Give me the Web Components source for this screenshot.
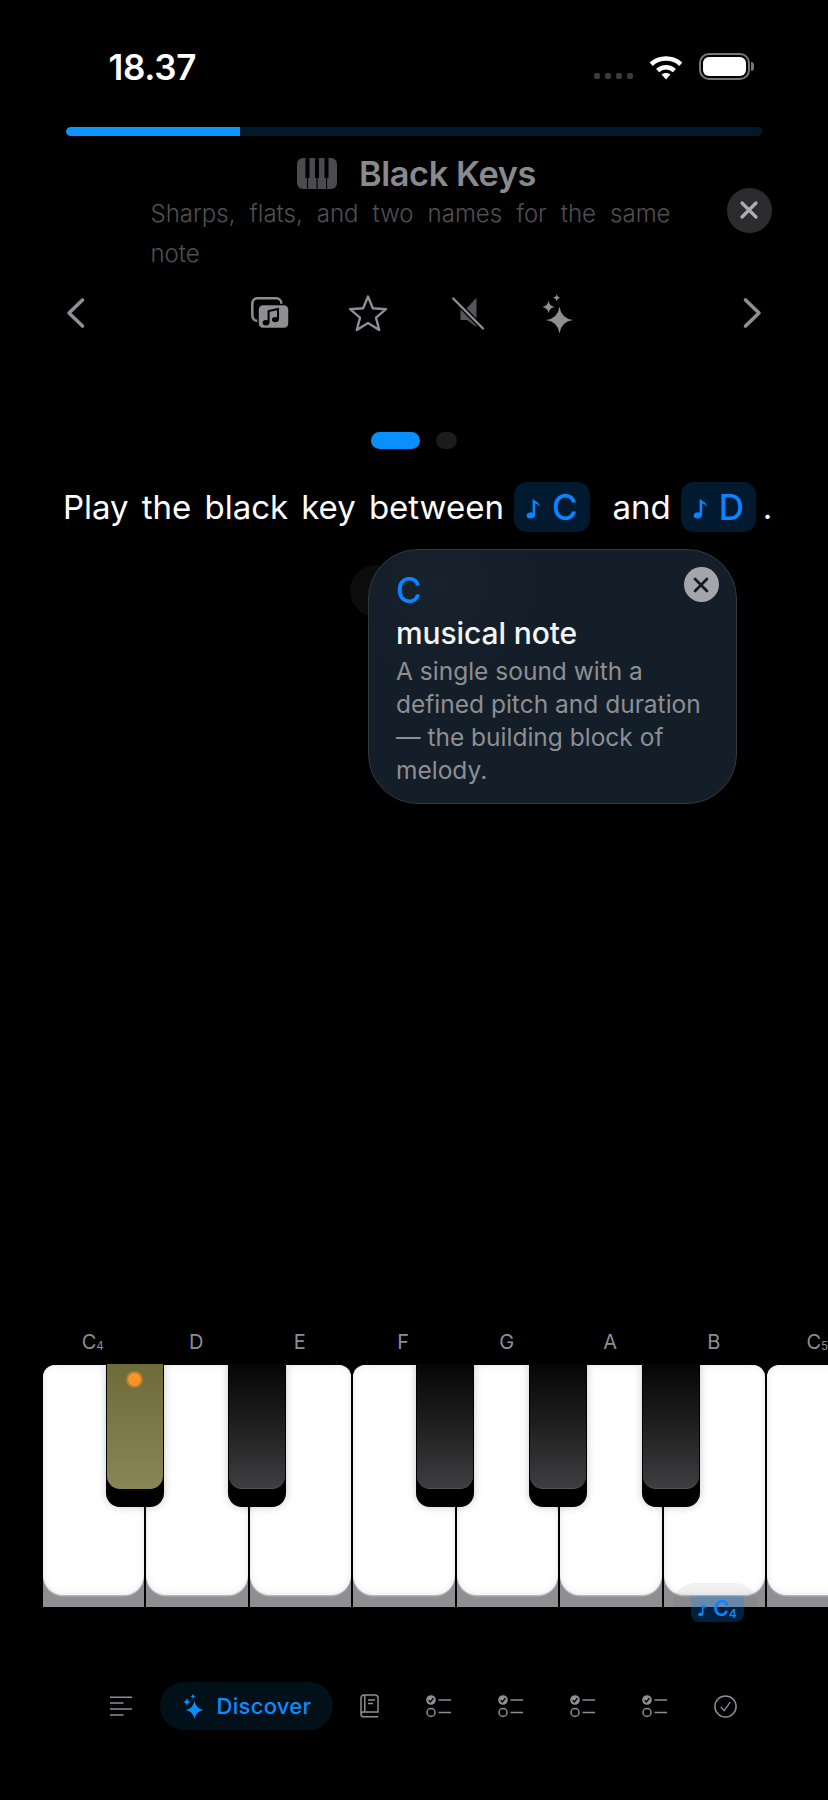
<!DOCTYPE html>
<html lang="en">
<head>
<meta charset="utf-8">
<title>Black Keys</title>
<style>
html,body{margin:0;background:#000;}
body{font-family:Inter,"Noto Sans",sans-serif;overflow:hidden;}
</style>
</head>
<body>
<app-screen></app-screen>
<script>
const star=(cx,cy,r,k=0.14)=>{const c=r*k;return `M${cx} ${cy-r}Q${cx+c} ${cy-c} ${cx+r} ${cy}Q${cx+c} ${cy+c} ${cx} ${cy+r}Q${cx-c} ${cy+c} ${cx-r} ${cy}Q${cx-c} ${cy-c} ${cx} ${cy-r}Z`;};
const ICONS={
 wifi:[34,26,`<g fill="none" stroke="#fff" stroke-width="4.6"><path d="M2.2 10.2C10.5 2.6 23.5 2.6 31.8 10.2"/><path d="M8.6 16.6C13.4 12.2 20.6 12.2 25.4 16.6"/></g><path d="M12.6 20.4C15.2 18.4 18.8 18.4 21.4 20.4L17 25.6Z" fill="#fff"/>`],
 piano:[40,31,`<rect width="40" height="31" rx="6" fill="#4b4b4e"/><g fill="#000"><rect x="8.5" width="4" height="20" rx=".6"/><rect x="18" width="4" height="20" rx=".6"/><rect x="27.5" width="4" height="20" rx=".6"/><rect x="10" y="19" width="1.1" height="12"/><rect x="19.5" y="19" width="1.1" height="12"/><rect x="29" y="19" width="1.1" height="12"/></g>`],
 close:[18,18,`<path d="M2 2L16 16M16 2L2 16" fill="none" stroke="currentColor" stroke-width="3.2" stroke-linecap="round"/>`],
 left:[19,30,`<path d="M16.5 2L3 15L16.5 28" fill="none" stroke="#8e8e93" stroke-width="3.6" stroke-linecap="round" stroke-linejoin="round"/>`],
 right:[19,30,`<path d="M2.5 2L16 15L2.5 28" fill="none" stroke="#8e8e93" stroke-width="3.6" stroke-linecap="round" stroke-linejoin="round"/>`],
 music:[38,32,`<rect x="1.3" y="1.3" width="29" height="22.5" rx="5" fill="none" stroke="#8e8e93" stroke-width="2.5"/><rect x="7" y="7.5" width="31" height="24" rx="5" fill="#8e8e93" stroke="#000" stroke-width="1.5"/><path d="M17.6 25.6V14L27 12V22.4" fill="none" stroke="#000" stroke-width="2"/><ellipse cx="15" cy="25.8" rx="3.4" ry="2.7" fill="#000"/><ellipse cx="24.3" cy="22.6" rx="3.4" ry="2.7" fill="#000"/>`],
 star:[38,36,`<polygon points="19,1.500 23.800,13.200 37,14.200 27,22.600 30.200,35 19,28 7.800,35 11,22.600 1,14.200 14.200,13.200" fill="none" stroke="#8e8e93" stroke-width="2.400" stroke-linejoin="round"/>`],
 mute:[32,32,`<path d="M24.500 .8V30L15 23H8.500V12H14Z" fill="#555557"/><path d="M1.200 1.500L31 31.500" stroke="#000" stroke-width="5"/><path d="M1.200 1.500L31 31.500" stroke="#8e8e93" stroke-width="2.400" stroke-linecap="round"/>`],
 sparkles:[32,39,`<g fill="#8e8e93"><path d="${star(17.5,26,13.5,0.12)}"/><path d="${star(6.5,13,6.3)}"/><path d="${star(14.7,3.7,3.7)}"/></g>`],
 note:[15,23,`<path d="M6.600 18V2.500C8.500 5.500 14 5.500 13.600 11C12.600 8.800 10.800 7.900 9.200 7.600V18.500C9.200 21 7 22.500 4.400 22.500C2 22.500 .6 21.200 .6 19.500C.6 17.600 2.700 16.200 4.800 16.200C5.500 16.200 6.100 16.400 6.600 16.700Z" fill="currentColor"/>`],
 lines:[22,20,`<path d="M0 1.200H22M0 7H13.500M0 13H22M0 19H13.500" stroke="#8e8e93" stroke-width="1.500"/>`],
 spark2:[21,25,`<g fill="#0a8cff"><path d="${star(11.5,16,9,0.16)}"/><path d="${star(4,8,4,0.16)}"/><path d="${star(10,2.5,2.4,0.16)}"/></g>`],
 book:[19,24,`<g fill="none" stroke="#8e8e93" stroke-width="1.500"><path d="M1 19.500V4A3 3 0 0 1 4 1H15A3 3 0 0 1 18 4V18H3.300C1.900 18 1 18.900 1 20.200C1 21.800 2 22.800 3.500 22.800H18.200"/><path d="M4.800 1V18"/><path d="M8 6H15M8 9.500H13"/></g>`],
 checklist:[25,22,`<circle cx="5" cy="5" r="4.800" fill="#8e8e93"/><path d="M2.700 5.200L4.400 7L7.400 3.100" fill="none" stroke="#000" stroke-width="1.400"/><circle cx="5" cy="17.500" r="4" fill="none" stroke="#8e8e93" stroke-width="1.500"/><path d="M12.500 5H25M12.500 17.500H25" stroke="#8e8e93" stroke-width="1.500"/>`],
 done:[23,23,`<circle cx="11.500" cy="11.500" r="10.600" fill="none" stroke="#8e8e93" stroke-width="1.500"/><path d="M6.800 12L10.200 15.700L16.200 7.200" fill="none" stroke="#8e8e93" stroke-width="1.300"/>`]
};
class UiIcon extends HTMLElement{
 connectedCallback(){
  const [w,h,body]=ICONS[this.getAttribute('name')];
  if(!this.shadowRoot)this.attachShadow({mode:'open'});
  this.shadowRoot.innerHTML=`<style>:host{display:block;flex:none;line-height:0;width:${w}px;height:${h}px}svg{display:block;overflow:visible}</style><svg xmlns="http://www.w3.org/2000/svg" width="${w}" height="${h}" viewBox="0 0 ${w} ${h}" aria-hidden="true">${body}</svg>`;
 }
}
customElements.define('ui-icon',UiIcon);

class StatusBar extends HTMLElement{
 constructor(){super();this.attachShadow({mode:'open'}).innerHTML=`<style>
 :host{display:flex;align-items:flex-start;height:127px;box-sizing:border-box;padding:50px 78px 0 108.500px}
 .t{font:600 35px/34px Inter,sans-serif;color:#fff;letter-spacing:-.3px;flex:1}
 .d{display:flex;gap:4.500px;margin-top:22.500px;margin-right:16px}
 .d i{width:6.500px;height:6.500px;border-radius:2px;background:#3a3a3c}
 .w{margin-top:4px;margin-right:16px}
 .b{box-sizing:border-box;margin-top:3px;width:51px;height:27px;border:2px solid #77777b;border-radius:10px;padding:2px;position:relative}
 .b b{display:block;height:100%;background:#fff;border-radius:6px}
 .b:after{content:"";position:absolute;right:-6px;top:7px;width:3px;height:9px;border-radius:0 3px 3px 0;background:#77777b}
 </style><div class="t">18.37</div><div class="d"><i></i><i></i><i></i><i></i></div><ui-icon class="w" name="wifi"></ui-icon><div class="b"><b></b></div>`;}
}
customElements.define('status-bar',StatusBar);

class LessonHeader extends HTMLElement{
 constructor(){super();this.attachShadow({mode:'open'}).innerHTML=`<style>
 :host{display:block}
 .track{margin:0 66px;height:9px;border-radius:5px;background:#04182b;overflow:hidden}
 .fill{width:174px;height:100%;background:#0a96ff;border-radius:5px 0 0 5px}
 .title{display:flex;align-items:center;gap:22px;height:40px;margin-top:17px;padding-left:297px;box-sizing:border-box}
 h1{margin:1px 0 -1px;font:600 34.300px/40px Inter,sans-serif;color:#8a8a8e;letter-spacing:-.4px}
 .sub{display:flex;align-items:flex-start;margin-top:1px;padding-left:150.500px}
 p{margin:0;width:520px;font:300 24px/40px Inter,sans-serif;color:#505052;text-align:justify}
 .x{width:44.500px;height:44.500px;margin:-6px 0 0 56.500px;border-radius:50%;background:#2c2c2e;color:#aeaeb2;display:flex;align-items:center;justify-content:center;flex:none}
 .tools{display:flex;justify-content:space-between;align-items:center;height:40px;margin:19px 66px 0}
 .mid{display:flex;align-items:center;margin-left:-3px}
 .mid ui-icon:nth-child(2){margin-left:60px}.mid ui-icon:nth-child(3){margin-left:65px}.mid ui-icon:nth-child(4){margin-left:58.500px}
 </style>
 <div class="track"><div class="fill"></div></div>
 <div class="title"><ui-icon name="piano"></ui-icon><h1>Black Keys</h1></div>
 <div class="sub"><p>Sharps, flats, and two names for the same note</p><div class="x"><ui-icon name="close"></ui-icon></div></div>
 <div class="tools"><ui-icon name="left"></ui-icon><div class="mid"><ui-icon name="music"></ui-icon><ui-icon name="star"></ui-icon><ui-icon name="mute"></ui-icon><ui-icon name="sparkles"></ui-icon></div><ui-icon name="right"></ui-icon></div>`;}
}
customElements.define('lesson-header',LessonHeader);

class PageDots extends HTMLElement{
 constructor(){super();this.attachShadow({mode:'open'}).innerHTML=`<style>
 :host{display:flex;gap:16.500px;margin-top:99px;padding-left:370.500px;height:17px}
 i{display:block;height:17px;border-radius:9px}
 .a{width:49px;background:#0a8fff}.b{width:21px;background:#1c1c1e}
 </style><i class="a"></i><i class="b"></i>`;}
}
customElements.define('page-dots',PageDots);

class NoteChip extends HTMLElement{
 constructor(){super();this.attachShadow({mode:'open'}).innerHTML=`<style>
 :host{display:flex;align-items:center;justify-content:center;gap:11px;width:75.500px;height:50px;border-radius:13px;background:#011a30;color:#0a84ff;font:500 35px/50px Inter,sans-serif;flex:none}
 </style><ui-icon name="note"></ui-icon><slot></slot>`;}
}
customElements.define('note-chip',NoteChip);

class PromptLine extends HTMLElement{
 constructor(){super();this.attachShadow({mode:'open'}).innerHTML=`<style>
 :host{display:flex;align-items:center;height:50px;margin-top:33px;padding-left:63px;font:400 33px/50px Inter,sans-serif;color:#fff}
 .lead{width:441px;text-align:justify;text-align-last:justify;white-space:nowrap;margin-right:10px;flex:none}
 .and{margin:0 10px 0 23px;flex:none}
 .end{margin-left:6.500px}
 </style><span class="lead">Play the black key between</span><note-chip>C</note-chip><span class="and">and</span><note-chip>D</note-chip><span class="end">.</span>`;}
}
customElements.define('prompt-line',PromptLine);

class TermCard extends HTMLElement{
 constructor(){super();this.attachShadow({mode:'open'}).innerHTML=`<style>
 :host{position:absolute;left:367.500px;top:549px;width:369px;height:255px;box-sizing:border-box;padding:20px 20px 0 27.500px;border-radius:50px;border:1.500px solid #34393e;
  background:radial-gradient(circle at 70px 34px,#17222c 0,#141f29 60px,#131e28 110px);color:#fff;z-index:2}
 .x{position:absolute;right:17px;top:17px;width:35px;height:35px;border-radius:50%;background:#a5a6ab;color:#16181b;display:flex;align-items:center;justify-content:center}
 .x ui-icon{transform:scale(.85)}
 .k{font:500 35px/40px Inter,sans-serif;color:#0a84ff}
 .h{font:500 30px/34px Inter,sans-serif;color:#f5f5f7;margin-top:6px;letter-spacing:-.1px}
 .d{font:400 24.500px/33px Inter,sans-serif;color:#8e8e93;margin-top:5px}
 </style><div class="x"><ui-icon name="close"></ui-icon></div><div class="k">C</div><div class="h">musical note</div><div class="d">A single sound with a<br>defined pitch and duration<br>— the building block of<br>melody.</div>`;}
}
customElements.define('term-card',TermCard);

class PianoKeyboard extends HTMLElement{
 constructor(){super();
 const labels=[['C','4'],['D'],['E'],['F'],['G'],['A'],['B'],['C','5']];
 const blacks=[105.5,228.2,415.5,528.5,642.2];
 this.attachShadow({mode:'open'}).innerHTML=`<style>
 :host{display:block;position:relative;width:828px}
 .labels{display:flex;height:23px;padding-left:42px;margin-bottom:12px;gap:2px;white-space:nowrap}
 .labels span{flex:none;width:101.500px;text-align:center;font:400 20px/25px Inter,sans-serif;color:#8e8e93}
 sub{font-size:11.500px;line-height:0;vertical-align:-1px}
 .keys{display:flex;gap:2px;padding-left:42.500px;height:242px}
 .w{flex:none;width:101.500px;height:242px;background:linear-gradient(#8e8e93,#8e8e93);border-radius:12px 12px 0 0}
 .w i{display:block;box-sizing:border-box;height:229.500px;background:#fff;border-radius:12px 12px 20px 20px;box-shadow:inset 0 0 7px rgba(70,80,90,.14),0 1.500px 0 #b4b4b9}
 .b{position:absolute;top:34px;width:58px;height:143px;background:#000;border-radius:0 0 14px 14px;box-shadow:0 0 8px rgba(0,0,0,.22);z-index:1}
 .b i{display:block;height:124px;margin:0 1px;border-radius:0 0 13px 13px;background:linear-gradient(#060606,#1f1f20 50%,#3e3e40);border-bottom:1px solid #555}
 .b.on i{background:linear-gradient(#6e6a39,#8a8556);height:125px;border-bottom:0}
 .dot{position:absolute;left:22.500px;top:9px;width:13px;height:13px;border-radius:50%;background:#ff9226;box-shadow:0 0 0 2px #a98236}
 .glow{position:absolute;left:673px;top:253px;width:84px;height:24px;border-radius:22px 22px 0 0;background:rgba(60,60,70,.07);z-index:2}
 .chip{position:absolute;left:691px;top:266px;width:53px;height:26px;border-radius:0 0 8px 8px;background:rgba(0,140,255,.23);color:#0a84ff;display:flex;align-items:center;justify-content:center;gap:6px;font:600 21px/26px Inter,sans-serif;z-index:3}
 .chip ui-icon{transform:scale(.62);margin:0 -3px}
 .chip span{white-space:nowrap}
 .chip sub{font-size:12px;vertical-align:-2px}
 </style>
 <div class="labels">${labels.map(l=>`<span>${l[0]}${l[1]?`<sub>${l[1]}</sub>`:''}</span>`).join('')}</div>
 <div class="keys">${labels.map(()=>'<div class="w"><i></i></div>').join('')}</div>
 ${blacks.map((x,i)=>`<div class="b${i==0?' on':''}" style="left:${x}px"><i></i>${i==0?'<span class="dot"></span>':''}</div>`).join('')}
 <div class="glow"></div>
 <div class="chip"><ui-icon name="note"></ui-icon><span>C<sub>4</sub></span></div>`;}
}
customElements.define('piano-keyboard',PianoKeyboard);

class BottomNav extends HTMLElement{
 constructor(){super();this.attachShadow({mode:'open'}).innerHTML=`<style>
 :host{display:flex;align-items:center;gap:47px;height:48px;padding-left:110px;margin-top:75px;margin-bottom:70px}
 .pill{display:flex;align-items:center;gap:13px;box-sizing:border-box;width:173px;height:48px;padding-left:22.500px;margin:0 -20px 0 -19px;border-radius:24px;background:#021019;color:#0a8cff;font:500 22px/48px Inter,sans-serif;letter-spacing:.3px}
 </style><ui-icon name="lines"></ui-icon><div class="pill"><ui-icon name="spark2"></ui-icon><span>Discover</span></div><ui-icon name="book"></ui-icon><ui-icon name="checklist"></ui-icon><ui-icon name="checklist"></ui-icon><ui-icon name="checklist"></ui-icon><ui-icon name="checklist"></ui-icon><ui-icon name="done"></ui-icon>`;}
}
customElements.define('bottom-nav',BottomNav);

class AppScreen extends HTMLElement{
 constructor(){super();this.attachShadow({mode:'open'}).innerHTML=`<style>
 :host{display:flex;flex-direction:column;position:relative;width:828px;height:1800px;overflow:hidden;background:#000;font-family:Inter,sans-serif}
 .ghost{position:absolute;left:350px;top:565px;width:52px;height:52px;border-radius:50%;background:#0c0c0c}
 piano-keyboard{margin-top:auto}
 </style><status-bar></status-bar><lesson-header></lesson-header><page-dots></page-dots><prompt-line></prompt-line><div class="ghost"></div><term-card></term-card><piano-keyboard></piano-keyboard><bottom-nav></bottom-nav>`;}
}
customElements.define('app-screen',AppScreen);
</script>
</body>
</html>
